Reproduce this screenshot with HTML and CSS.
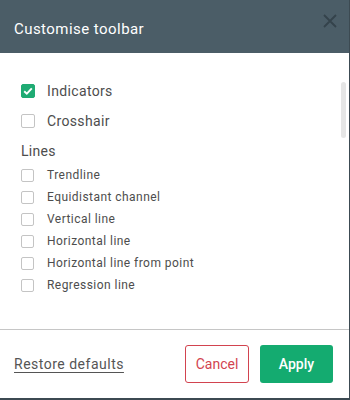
FILE: index.html
```html
<!DOCTYPE html>
<html>
<head>
<meta charset="utf-8">
<link rel="stylesheet" href="styles.css">
</head>
<body>
<div class="dialog">
  <div class="header">
    <span class="title">Customise toolbar</span>
    <svg class="close" width="14" height="14" viewBox="0 0 14 14"><path d="M1 1L13 13M13 1L1 13" stroke="#34434b" stroke-width="1.8" fill="none"/></svg>
  </div>
  <div class="content">
    <div class="thumb"></div>
    <label class="row big"><span class="box checked"><svg width="10" height="8" viewBox="0 0 10 8"><path d="M1.2 4.2L3.8 6.6L8.8 1.4" stroke="#fff" stroke-width="1.9" fill="none"/></svg></span>Indicators</label>
    <label class="row big"><span class="box"></span>Crosshair</label>
    <div class="group">Lines</div>
    <label class="row small"><span class="box sm"></span>Trendline</label>
    <label class="row small"><span class="box sm"></span>Equidistant channel</label>
    <label class="row small"><span class="box sm"></span>Vertical line</label>
    <label class="row small"><span class="box sm"></span>Horizontal line</label>
    <label class="row small"><span class="box sm"></span>Horizontal line from point</label>
    <label class="row small"><span class="box sm"></span>Regression line</label>
  </div>
  <div class="footer">
    <a class="restore">Restore defaults</a>
    <div class="buttons">
      <button class="btn cancel">Cancel</button>
      <button class="btn apply">Apply</button>
    </div>
  </div>
</div>
</body>
</html>
```
FILE: styles.css
```css
html, body {
  margin: 0;
  padding: 0;
  background: #3c4a52;
  width: 350px;
  height: 400px;
  overflow: hidden;
}
.dialog {
  width: 349px;
  height: 398px;
  background: #fff;
  display: flex;
  flex-direction: column;
  font-family: Roboto, "Liberation Sans", sans-serif;
}
.header {
  height: 53px;
  background: #4b5d67;
  display: flex;
  align-items: center;
  justify-content: space-between;
  padding: 0 12px 0 14px;
  box-sizing: border-box;
}
.title {
  color: #fff;
  font-size: 15px;
  letter-spacing: 0.45px;
  margin-top: 5px;
}
.close {
  margin-top: -12px;
}
.content {
  position: relative;
  flex: 1;
  padding: 23px 0 0 21px;
  box-sizing: border-box;
  border-bottom: 1px solid #c6c6c6;
  color: #4d4d4d;
}
.thumb {
  position: absolute;
  left: 341px;
  top: 29px;
  width: 5px;
  height: 56px;
  background: #e5e5e5;
  border-radius: 3px;
}
.row {
  display: flex;
  align-items: center;
  letter-spacing: 0.35px;
}
.row.big {
  height: 30px;
  font-size: 14px;
}
.row.small {
  height: 22px;
  font-size: 12px;
  letter-spacing: 0.45px;
}
.group {
  height: 28px;
  line-height: 30px;
  font-size: 14px;
  letter-spacing: 0.3px;
}
.box {
  width: 14px;
  height: 14px;
  box-sizing: border-box;
  border: 1px solid #c4c4c4;
  border-radius: 2px;
  margin-right: 12px;
  display: flex;
  align-items: center;
  justify-content: center;
}
.box.sm {
  width: 13px;
  height: 13px;
  margin-right: 13px;
}
.box.checked {
  background: #1fab73;
  border-color: #1fab73;
}
.footer {
  height: 68px;
  display: flex;
  align-items: center;
  justify-content: space-between;
  padding: 0 16px 0 14px;
}
.restore {
  font-size: 14px;
  color: #555;
  text-decoration: underline;
  letter-spacing: 0.5px;
  text-underline-offset: 3px;
}
.buttons {
  display: flex;
  gap: 11px;
}
.btn {
  height: 38px;
  font-family: Roboto, "Liberation Sans", sans-serif;
  font-size: 14px;
  border-radius: 3px;
  padding: 0;
}
.cancel {
  width: 64px;
  background: #fff;
  border: 1px solid #d2434f;
  color: #d2434f;
}
.apply {
  width: 73px;
  background: #14ab70;
  border: none;
  color: #fff;
  font-weight: 500;
}
```
